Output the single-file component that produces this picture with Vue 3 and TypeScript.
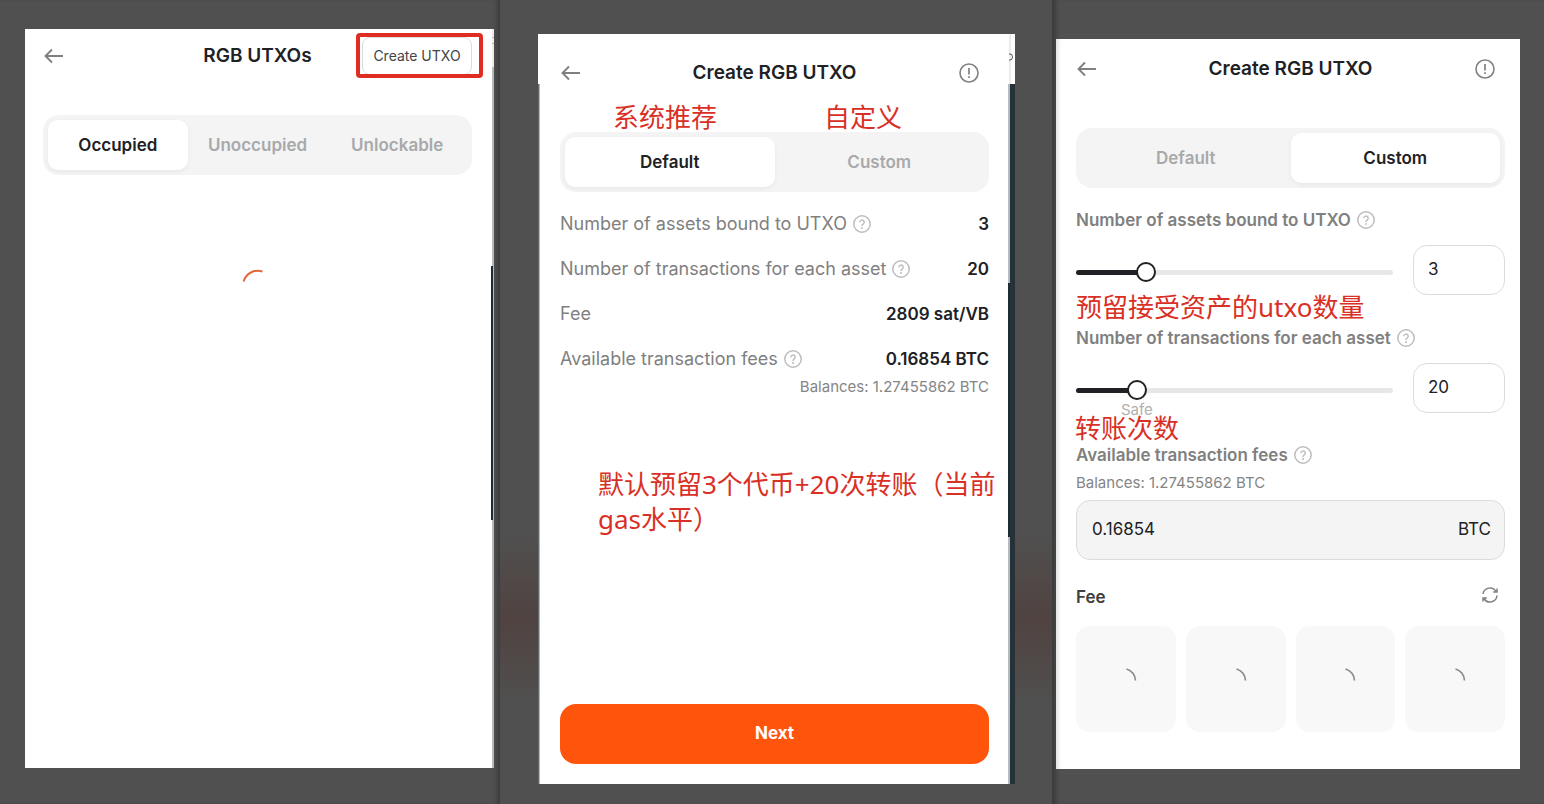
<script setup lang="ts">
import { ref, computed } from 'vue'

const occupancyTabs = ['Occupied', 'Unoccupied', 'Unlockable']
const modeTabs = ['Default', 'Custom']
const occupancy = ref('Occupied')
const presetMode = ref('Default')
const customMode = ref('Custom')

const assets = ref(3)
const transactions = ref(20)
const amount = ref('0.16854')

const assetsFill = computed(() => ((assets.value - 1) / 9) * 100 + '%')
const transactionsFill = computed(() => ((transactions.value - 1) / 99) * 100 + '%')

const summary = [
  { label: 'Number of assets bound to UTXO', value: '3', help: true },
  { label: 'Number of transactions for each asset', value: '20', help: true },
  { label: 'Fee', value: '2809 sat/VB', help: false },
  { label: 'Available transaction fees', value: '0.16854 BTC', help: true },
]
</script>

<template>
  <svg class="defs" aria-hidden="true">
    <symbol id="i-back" viewBox="0 0 20 16">
      <path d="M20 8H2M9 1.500L2.500 8l6.500 6.500" fill="none" stroke="currentColor" stroke-width="1.900" />
    </symbol>
    <symbol id="i-help" viewBox="0 0 18 18">
      <circle cx="9" cy="9" r="8.200" fill="none" stroke="currentColor" stroke-width="1.500" />
      <path d="M6.800 7.300a2.200 2.200 0 1 1 3.300 1.900c-.8.500-1.100.8-1.100 1.700" fill="none" stroke="currentColor" stroke-width="1.500" />
      <circle cx="9" cy="13" r="1" fill="currentColor" />
    </symbol>
    <symbol id="i-info" viewBox="0 0 20 20">
      <circle cx="10" cy="10" r="9" fill="none" stroke="currentColor" stroke-width="1.600" />
      <path d="M10 5v6.500M10 13.300v1.700" fill="none" stroke="currentColor" stroke-width="1.700" />
    </symbol>
  </svg>
  <main class="board">
    <section class="column first">
      <div class="panel">
        <header class="bar">
          <button class="icon" aria-label="Back"><svg width="20" height="16"><use href="#i-back" /></svg></button>
          <h1>RGB UTXOs</h1>
          <button class="create">Create UTXO</button>
        </header>
        <div class="tabs">
          <button v-for="t in occupancyTabs" :key="t" :class="{ on: occupancy === t }" @click="occupancy = t">{{ t }}</button>
        </div>
        <svg class="loading" width="34" height="34" viewBox="0 0 34 34" role="img" aria-label="Loading">
          <path d="M2.500 12.500A15 15 0 0 1 21.500 2.500" fill="none" stroke="#e0693a" stroke-width="2" />
        </svg>
        <span class="ticks"></span>
        <span class="rail"></span>
        <span class="thumb"></span>
        <span class="mark"></span>
      </div>
    </section>

    <section class="column second">
      <div class="panel">
        <header class="bar">
          <button class="icon" aria-label="Back"><svg width="20" height="16"><use href="#i-back" /></svg></button>
          <h1>Create RGB UTXO</h1>
          <button class="icon" aria-label="Information"><svg width="20" height="20"><use href="#i-info" /></svg></button>
        </header>
        <div class="tabs">
          <button v-for="t in modeTabs" :key="t" :class="{ on: presetMode === t }" @click="presetMode = t">{{ t }}</button>
        </div>
        <dl class="summary">
          <div v-for="r in summary" :key="r.label">
            <dt>{{ r.label }}<svg v-if="r.help" class="help" width="18" height="18"><use href="#i-help" /></svg></dt>
            <dd>{{ r.value }}</dd>
          </div>
        </dl>
        <p class="balance right">Balances: 1.27455862 BTC</p>
        <button class="next">Next</button>
        <span class="edge"></span>
        <span class="strip"></span>
        <span class="crease"></span>
        <svg class="sliver" width="5" height="8" viewBox="0 0 5 8" aria-hidden="true">
          <path d="M0 1h1a2.500 3 0 0 1 0 6H0" fill="none" stroke="#555" />
        </svg>
        <span class="rail"></span>
        <span class="thumb"></span>
        <p class="note recommended">系统推荐</p>
        <p class="note defined">自定义</p>
        <p class="note reserve">默认预留3个代币+20次转账（当前<br />gas水平）</p>
      </div>
    </section>

    <section class="column third">
      <div class="panel">
        <header class="bar">
          <button class="icon" aria-label="Back"><svg width="20" height="16"><use href="#i-back" /></svg></button>
          <h1>Create RGB UTXO</h1>
          <button class="icon" aria-label="Information"><svg width="20" height="20"><use href="#i-info" /></svg></button>
        </header>
        <div class="tabs">
          <button v-for="t in modeTabs" :key="t" :class="{ on: customMode === t }" @click="customMode = t">{{ t }}</button>
        </div>

        <div class="field">
          <label for="assets">Number of assets bound to UTXO<svg class="help" width="18" height="18"><use href="#i-help" /></svg></label>
          <div class="control">
            <div class="slider">
              <div class="track"><div class="fill" :style="{ width: assetsFill }"></div></div>
              <input id="assets" v-model.number="assets" type="range" min="1" max="10" />
            </div>
            <input v-model.number="assets" class="box" type="text" aria-label="Number of assets" />
          </div>
        </div>
        <div class="field">
          <label for="transactions">Number of transactions for each asset<svg class="help" width="18" height="18"><use href="#i-help" /></svg></label>
          <div class="control">
            <div class="slider">
              <div class="track"><div class="fill" :style="{ width: transactionsFill }"></div></div>
              <input id="transactions" v-model.number="transactions" type="range" min="1" max="100" />
              <span class="safe" :style="{ left: transactionsFill }">Safe</span>
            </div>
            <input v-model.number="transactions" class="box" type="text" aria-label="Number of transactions" />
          </div>
        </div>
        <div class="amount">
          <label for="amount">Available transaction fees<svg class="help" width="18" height="18"><use href="#i-help" /></svg></label>
          <p class="balance">Balances: 1.27455862 BTC</p>
          <div class="money"><input id="amount" v-model="amount" type="text" /><span>BTC</span></div>
        </div>
        <div class="fee">
          <h2>Fee</h2>
          <button class="icon" aria-label="Refresh">
            <svg width="18" height="18" viewBox="0 0 18 18" fill="none" stroke="currentColor" stroke-width="1.500">
              <path d="M2 8a7 7 0 0 1 13-2.500M16 2.500V6h-3.800M16 9.500a7 7 0 0 1-13 3M2 15.500V12h3.800" />
            </svg>
          </button>
        </div>
        <div class="cards">
          <div v-for="n in 4" :key="n" class="card">
            <svg width="22" height="22" viewBox="0 0 22 22" role="img" aria-label="Loading">
              <path d="M11.500 1A12 12 0 0 1 20.500 12.500" fill="none" stroke="#8b8b8b" stroke-width="1.700" />
            </svg>
          </div>
        </div>
        <p class="note assets-note">预留接受资产的utxo数量</p>
        <p class="note transfers-note">转账次数</p>
      </div>
    </section>
  </main>
</template>

<style>
body { margin: 0; background: #505050; }
</style>

<style scoped>
* { box-sizing: border-box; }
.defs { position: absolute; width: 0; height: 0; }
.board {
  display: grid;
  grid-template-columns: 500fr 552fr 492fr;
  min-height: 100vh;
  font-family: Inter, "Noto Sans CJK SC", sans-serif;
  color: #202124;
}
button, input { font: inherit; color: inherit; }
button { cursor: pointer; border: 0; background: none; padding: 0; }
h1, h2, p, dl, dd { margin: 0; }
.column { display: flex; background: #505050; }
.first { padding: 29px 6px 36px 25px; box-shadow: inset -5px 0 4px -2px #3c3c3c; }
.second {
  padding: 34px 37px 20px 38px;
  background: linear-gradient(#50505000 66%, #504341 77%, #50505000 88%), #505050;
}
.third { padding: 39px 24px 35px 4px; box-shadow: inset 6px 0 4px -2px #3c3c3c; }
.panel { position: relative; flex: 1; min-width: 0; background: #fff; display: flex; flex-direction: column; }
.first .panel { padding: 5px 22px 0 18px; }
.second .panel { padding: 17px 26px 20px 22px; }
.third .panel { padding: 8px 15px 37px 20px; box-shadow: inset 5px 0 4px -3px #dcdcdc; }
.bar { display: grid; grid-template-columns: 110px 1fr 110px; align-items: center; height: 44px; }
.bar h1 { font-size: 19px; line-height: 24px; font-weight: 600; text-align: center; white-space: nowrap; }
.icon { display: flex; color: #808080; justify-self: start; }
.icon:last-child { justify-self: end; margin-right: 10px; }
.create { height: 38px; padding-bottom: 2px; border: 1px solid #dcdcdc; border-radius: 8px; font-size: 14px; color: #444; }
.tabs { display: flex; margin-top: 37px; height: 60px; flex: none; padding: 5px; border-radius: 16px; background: #f4f4f4; }
.tabs button { flex: 1 1 0; border-radius: 10px; font-size: 17px; font-weight: 600; color: #a8a9ab; }
.tabs .on { background: #fff; color: #202124; box-shadow: 0 2px 5px #0000000d; }
.loading { align-self: center; margin-top: 94px; }
.rail, .thumb, .edge, .strip, .mark, .note, .ticks, .crease, .sliver { position: absolute; }
.ticks { right: 0; top: 0; width: 2px; height: 38px; background: linear-gradient(#ececec 8px, #b5b5b5 8px 9px, #ececec 9px 14px, #b5b5b5 14px 15px, #ececec 15px); }
.rail { width: 2px; right: 0; top: 38px; bottom: 0; background: #b5babd; }
.thumb { width: 2px; right: 1px; top: 237px; height: 254px; background: #1e2c33; }
.mark { left: 331px; top: 4px; width: 127px; height: 45px; border: 4px solid #e02d23; border-radius: 4px; }
.second .strip { right: 0; top: 50px; bottom: 0; width: 5px; background: #26323a; }
.second .rail { right: 5px; top: 50px; }
.second .thumb { right: 5px; top: 249px; }
.crease { right: 4px; top: 0; width: 2px; height: 50px; background: #ececec; }
.sliver { right: 1px; top: 19px; }
.edge { left: 0; top: 50px; bottom: 0; width: 2px; border-right: 1px solid #b0b5b8; background: #636a6e; }
.summary { margin-top: 9px; }
.summary div { display: flex; justify-content: space-between; align-items: center; height: 45px; }
.summary dt { display: flex; align-items: center; font-size: 18px; color: #808080; }
.summary dd { font-size: 17px; font-weight: 600; }
.help { margin-left: 6px; color: #bdbdbd; flex: none; }
.balance { font-size: 15px; line-height: 20px; color: #858585; }
.right { text-align: right; margin-top: -4px; }
.next { margin-top: auto; height: 60px; padding-bottom: 2px; border-radius: 16px; background: #ff540c; color: #fff; font-size: 17px; font-weight: 700; }
.note { color: #d93025; font-size: 26px; line-height: 35px; white-space: nowrap; font-family: "Noto Sans", "Noto Sans CJK SC", sans-serif; }
.recommended { left: 75px; top: 66px; }
.defined { left: 286px; top: 66px; }
.reserve { left: 60px; top: 433px; }
.assets-note { left: 20px; top: 251px; }
.transfers-note { left: 19px; top: 372px; }
.field { margin-top: 20px; height: 98px; flex: none; }
.field label, .amount label { display: flex; align-items: center; height: 24px; font-size: 17px; font-weight: 600; color: #808080; }
.control { display: flex; gap: 20px; margin-top: 13px; align-items: center; }
.slider { position: relative; flex: 1; height: 20px; margin-top: 4px; }
.track { position: absolute; left: 0; right: 0; top: 8px; height: 5px; border-radius: 3px; background: #e7e7e7; }
.fill { height: 5px; border-radius: 3px; background: #202124; }
.slider input { position: absolute; left: -10px; top: 0; width: calc(100% + 20px); height: 20px; margin: 0; appearance: none; background: transparent; }
.slider input::-webkit-slider-thumb { appearance: none; width: 20px; height: 20px; border: 2px solid #202124; border-radius: 50%; background: #fff; }
.safe { position: absolute; top: 20px; transform: translateX(-50%); font-size: 15px; line-height: 20px; color: #b0b0b0; }
.box { width: 92px; height: 50px; border: 1px solid #dcdcdc; border-radius: 14px; padding: 0 14px 2px; font-size: 17px; background: #fff; }
.amount { margin-top: 19px; }
.amount .balance { margin-top: 6px; }
.money { display: flex; align-items: center; height: 60px; margin-top: 7px; padding: 0 13px 2px 15px; border: 1px solid #dcdcdc; border-radius: 14px; background: #f4f4f4; font-size: 17px; }
.money input { flex: 1; min-width: 0; border: 0; padding: 0; background: none; }
.fee { display: flex; justify-content: space-between; align-items: center; margin-top: 25px; height: 24px; }
.fee h2 { font-size: 17px; line-height: 24px; font-weight: 600; color: #404040; }
.fee .icon { margin-right: 6px; padding-bottom: 4px; }
.cards { display: grid; grid-template-columns: repeat(4, 1fr); gap: 10px; margin-top: 17px; }
.card { display: flex; align-items: center; justify-content: center; height: 106px; border-radius: 14px; background: #f8f8f8; }
</style>
